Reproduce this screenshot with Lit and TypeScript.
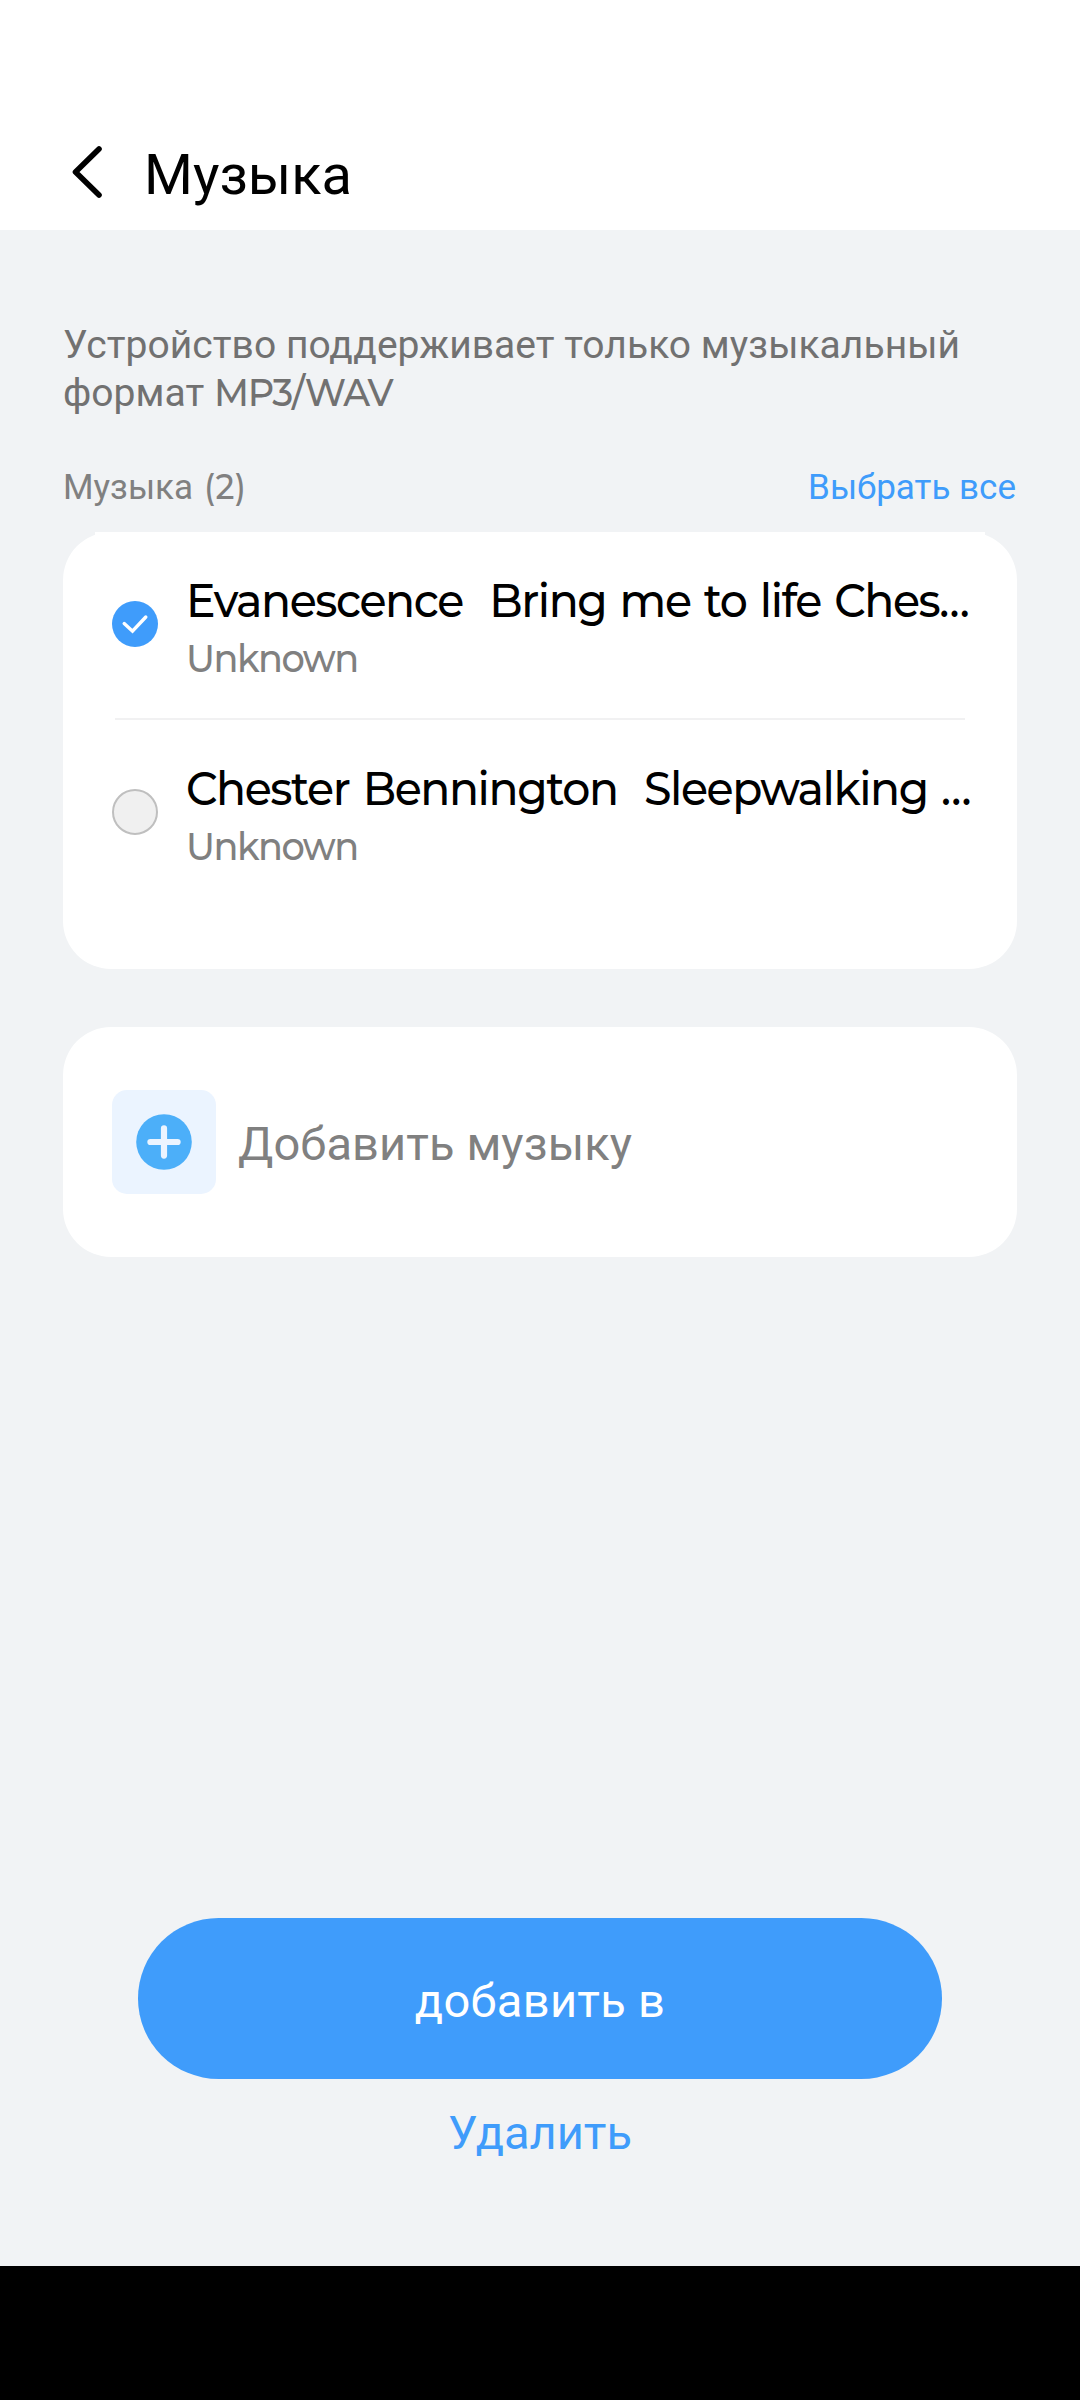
import { LitElement, html, css, svg } from "lit";
import { customElement, property, state } from "lit/decorators.js";

interface Track {
  title: string;
  artist: string;
  selected: boolean;
}

@customElement("check-mark")
class CheckMark extends LitElement {
  @property({ type: Boolean }) checked = false;

  static styles = css`
    :host { display: block; flex: none; width: 46px; height: 46px; }
    svg { display: block; }
  `;

  render() {
    return html`<svg width="46" height="46" viewBox="0 0 46 46" fill="none">
      ${this.checked
        ? svg`<circle cx="23" cy="23" r="23" fill="#3f9cfb" />
            <path d="M12.2 22.6 L20.5 30.2 L33.8 16" stroke="#fff" stroke-width="3.4" stroke-linecap="round" stroke-linejoin="miter" />`
        : svg`<circle cx="23" cy="23" r="22" fill="#f0f0f0" stroke="#bfbfbf" stroke-width="2" />`}
    </svg>`;
  }
}

@customElement("track-row")
class TrackRow extends LitElement {
  @property({ attribute: false }) track!: Track;

  static styles = css`
    :host { display: block; }
    .row {
      box-sizing: border-box;
      height: 186px;
      padding: 41px 0 0 17px;
      display: flex;
      align-items: flex-start;
    }
    check-mark { margin-top: 28px; }
    .text {
      margin-left: 27.5px;
      font-family: Montserrat, Lato, sans-serif;
      font-weight: 500;
      white-space: pre;
      transform: scaleX(0.94);
      transform-origin: 0 0;
    }
    .title { font-size: 47px; line-height: 56px; letter-spacing: -1.52px; word-spacing: 3px; color: #000; }
    .artist { font-size: 39px; line-height: 58px; letter-spacing: -1.55px; color: #808080; }
  `;

  render() {
    return html`<div class="row">
      <check-mark ?checked=${this.track.selected}></check-mark>
      <div class="text"><div class="title">${this.track.title}</div><div class="artist">${this.track.artist}</div></div>
    </div>`;
  }
}

@customElement("app-root")
class AppRoot extends LitElement {
  @state() private tracks: Track[] = [
    { title: "Evanescence  Bring me to life Ches…", artist: "Unknown", selected: true },
    { title: "Chester Bennington  Sleepwalking …", artist: "Unknown", selected: false },
  ];

  static styles = css`
    :host {
      display: flex;
      flex-direction: column;
      width: 1080px;
      height: 2400px;
      background: #f1f3f5;
      font-family: Roboto, sans-serif;
      overflow: hidden;
    }
    .header {
      box-sizing: border-box;
      height: 230px;
      padding: 120px 0 0 70px;
      display: flex;
      align-items: center;
      background: #fff;
    }
    .back { display: block; width: 36px; height: 60px; margin-top: -6px; }
    .heading { margin: 0 0 0 38px; font-size: 56px; font-weight: 400; line-height: 66px; color: #000; }
    .content { flex: 1; padding: 90px 63px 0; display: flex; flex-direction: column; }
    .hint { margin: 0; padding: 1px 0; font-size: 39px; line-height: 48px; letter-spacing: 0.04px; color: #717171; }
    .latin {
      display: inline-block;
      font-family: Montserrat, Lato, sans-serif;
      font-weight: 500;
      letter-spacing: -1.4px;
      line-height: 1;
      transform: scaleX(0.94);
      transform-origin: 0 0;
    }
    .section {
      display: flex;
      justify-content: space-between;
      margin: 50px 0 24px;
      padding: 0 1px 0 0;
      font-size: 35px;
      line-height: 40px;
      color: #808080;
    }
    .count { letter-spacing: 0.4px; margin-left: 2px; }
    .all { color: #3f9cfb; }
    .card { background: #fff; border-radius: 48px; }
    .list { height: 437px; }
    .tracks { margin: 0 32px; background: #fff; }
    .divider { height: 2px; margin: 0 20px; background: #f1f1f2; }
    .add { margin-top: 58px; height: 230px; box-sizing: border-box; padding-left: 49px; display: flex; align-items: center; }
    .plus { display: block; }
    .add-label { margin-left: 22px; padding-top: 3px; font-size: 47px; letter-spacing: 0.1px; line-height: 56px; color: #808080; }
    .actions { margin: auto 0 105px; display: flex; flex-direction: column; align-items: center; }
    .primary {
      box-sizing: border-box;
      width: 804px;
      height: 161px;
      padding-top: 3px;
      border-radius: 81px;
      background: #3f9cfb;
      color: #fff;
      font-size: 47px;
      letter-spacing: 0.3px;
      display: flex;
      align-items: center;
      justify-content: center;
    }
    .remove { margin-top: 25px; font-size: 47px; line-height: 57px; color: #3f9cfb; }
    .navbar { height: 134px; background: #000; }
  `;

  render() {
    return html`
      <div class="header">
        <svg class="back" viewBox="0 0 36 60" fill="none">
          <path d="M29 7 L5.5 30 L29 53" stroke="#000" stroke-width="5.6" stroke-linecap="round" stroke-linejoin="round" />
        </svg>
        <h1 class="heading">Музыка</h1>
      </div>
      <div class="content">
        <p class="hint">Устройство поддерживает только музыкальный<br />формат <span class="latin">MP3/WAV</span></p>
        <div class="section">
          <span>Музыка <span class="latin count">(2)</span></span>
          <span class="all">Выбрать все</span>
        </div>
        <div class="card list">
          <div class="tracks">
            ${this.tracks.map((t, i) => html`${i ? html`<div class="divider"></div>` : null}<track-row .track=${t}></track-row>`)}
          </div>
        </div>
        <div class="card add">
          <svg class="plus" width="104" height="104" viewBox="0 0 104 104">
            <rect width="104" height="104" rx="15" fill="#ebf4ff" />
            <circle cx="52" cy="52" r="27.8" fill="#4caff9" />
            <path d="M52 38.4 V65.6 M38.4 52 H65.6" stroke="#ebf4ff" stroke-width="6.2" stroke-linecap="round" />
          </svg>
          <span class="add-label">Добавить музыку</span>
        </div>
        <div class="actions">
          <div class="primary">добавить в</div>
          <div class="remove">Удалить</div>
        </div>
      </div>
      <div class="navbar"></div>
    `;
  }
}
